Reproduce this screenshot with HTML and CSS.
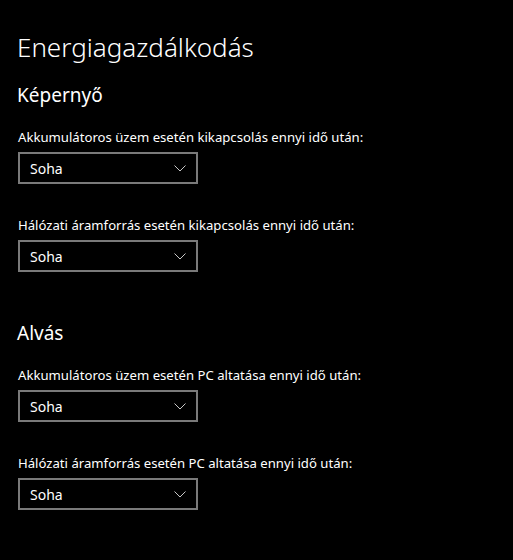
FILE: index.html
```html
<!DOCTYPE html>
<html lang="hu">
<head>
    <meta charset="UTF-8">
    <meta name="viewport" content="width=device-width, initial-scale=1.0">
    <title>Energiagazdálkodás</title>
    <link rel="stylesheet" href="styles.css">
</head>
<body>
    <main class="page">
        <h1 class="page-title">Energiagazdálkodás</h1>

        <section class="group">
            <h2 class="group-title">Képernyő</h2>

            <div class="setting">
                <label class="setting-label">Akkumulátoros üzem esetén kikapcsolás ennyi idő után:</label>
                <div class="dropdown">
                    <span>Soha</span>
                    <svg class="chevron" width="12" height="7" viewBox="0 0 12 7"><path d="M0.5 0.5 L6 6 L11.5 0.5" fill="none" stroke="#c8c8c8" stroke-width="1"/></svg>
                </div>
            </div>

            <div class="setting">
                <label class="setting-label">Hálózati áramforrás esetén kikapcsolás ennyi idő után:</label>
                <div class="dropdown">
                    <span>Soha</span>
                    <svg class="chevron" width="12" height="7" viewBox="0 0 12 7"><path d="M0.5 0.5 L6 6 L11.5 0.5" fill="none" stroke="#c8c8c8" stroke-width="1"/></svg>
                </div>
            </div>
        </section>

        <section class="group">
            <h2 class="group-title">Alvás</h2>

            <div class="setting">
                <label class="setting-label">Akkumulátoros üzem esetén PC altatása ennyi idő után:</label>
                <div class="dropdown">
                    <span>Soha</span>
                    <svg class="chevron" width="12" height="7" viewBox="0 0 12 7"><path d="M0.5 0.5 L6 6 L11.5 0.5" fill="none" stroke="#c8c8c8" stroke-width="1"/></svg>
                </div>
            </div>

            <div class="setting">
                <label class="setting-label">Hálózati áramforrás esetén PC altatása ennyi idő után:</label>
                <div class="dropdown">
                    <span>Soha</span>
                    <svg class="chevron" width="12" height="7" viewBox="0 0 12 7"><path d="M0.5 0.5 L6 6 L11.5 0.5" fill="none" stroke="#c8c8c8" stroke-width="1"/></svg>
                </div>
            </div>
        </section>
    </main>
</body>
</html>
```

FILE: styles.css
```css
html, body {
    margin: 0;
    background-color: #000000;
}

body {
    font-family: 'Noto Sans', 'Open Sans', sans-serif;
    color: #ffffff;
    height: 560px;
    overflow: hidden;
}

.page {
    padding: 29px 0 0 17px;
}

.page-title {
    margin: 0;
    font-size: 26px;
    font-weight: 300;
    line-height: 36px;
}

.group {
    display: flex;
    flex-direction: column;
    gap: 31px;
    margin-top: 47px;
}

.group:first-of-type {
    margin-top: 16px;
}

.group-title {
    margin: 0 0 -13px 0;
    font-size: 19px;
    font-weight: 400;
    line-height: 28px;
}

.setting {
    display: flex;
    flex-direction: column;
    align-items: flex-start;
    gap: 6px;
    padding-left: 1px;
}

.setting-label {
    font-size: 13.15px;
    line-height: 20px;
}

.dropdown {
    box-sizing: border-box;
    width: 180px;
    height: 32px;
    margin-top: -1px;
    border: 2px solid #7a7a7a;
    display: flex;
    align-items: center;
    justify-content: space-between;
    padding: 0 10px 0 10px;
    font-size: 14px;
}

.chevron {
    display: block;
}
```
